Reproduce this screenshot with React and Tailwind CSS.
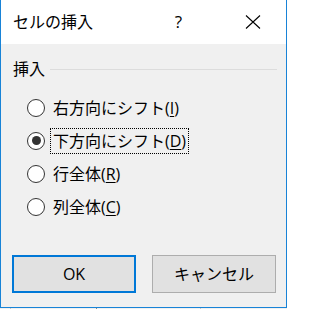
import React, { useState } from "react";

const FONT = { fontFamily: '"Open Sans", "Noto Sans CJK JP", sans-serif' };

const options = [
  { label: "右方向にシフト", key: "I" },
  { label: "下方向にシフト", key: "D" },
  { label: "行全体", key: "R" },
  { label: "列全体", key: "C" },
];

const Radio = ({ checked }) => (
  <span className="w-[18px] h-[18px] rounded-full border border-[#333333] bg-white flex items-center justify-center shrink-0">
    {checked && <span className="w-[9px] h-[9px] rounded-full bg-[#333333]" />}
  </span>
);

export default function App() {
  const [selected, setSelected] = useState(1);

  return (
    <div className="w-[287px] h-[309px] overflow-hidden bg-[#f0f0f0] flex flex-col text-[#000000]" style={FONT}>
      {/* Dialog window */}
      <div className="w-[287px] h-[308px] border-l border-r border-b border-[#1883d7] flex flex-col">
        {/* Title bar */}
        <div className="h-[44px] bg-white flex items-center shrink-0">
          <span className="ml-[12px] text-[16px] leading-[20px]">セルの挿入</span>
          <span className="ml-auto mr-[63px] text-[17px] leading-[20px]">?</span>
          <svg width="16" height="16" viewBox="0 0 16 16" className="mr-[25px]">
            <path d="M1 1.5 L15 14.5 M15 1.5 L1 14.5" stroke="#000" strokeWidth="1.1" fill="none" />
          </svg>
        </div>

        {/* Body */}
        <div className="flex-1 bg-[#f0f0f0] flex flex-col">
          {/* Group header */}
          <div className="mt-[16px] h-[18px] flex items-center">
            <span className="ml-[12px] text-[16px] leading-[18px]">挿入</span>
            <span className="ml-[5px] mr-[9px] flex-1 h-px bg-[#dcdcdc]" />
          </div>

          {/* Radio options */}
          <div className="mt-[13px] flex flex-col">
            {options.map((opt, i) => (
              <label
                key={opt.key}
                className="h-[33px] flex items-center cursor-default"
                onClick={() => setSelected(i)}
              >
                <span className="ml-[26px]">
                  <Radio checked={selected === i} />
                </span>
                <span
                  className={`ml-[5px] h-[26px] px-[2px] flex items-center text-[16px] leading-[20px] border border-dotted ${
                    selected === i ? "border-[#000000]" : "border-transparent"
                  }`}
                >
                  {opt.label}(<u className="underline-offset-[2px]">{opt.key}</u>)
                </span>
              </label>
            ))}
          </div>

          {/* Buttons */}
          <div className="mt-[32px] flex gap-[16px] ml-[11px]">
            <button
              type="button"
              className="w-[124px] h-[38px] border-2 border-[#0078d7] bg-[#e1e1e1] text-[16px] flex items-center justify-center"
            >
              OK
            </button>
            <button
              type="button"
              className="w-[124px] h-[38px] border border-[#adadad] bg-[#e1e1e1] text-[16px] flex items-center justify-center"
            >
              キャンセル
            </button>
          </div>
        </div>
      </div>

      {/* Strip of the window behind */}
      <div className="h-px flex">
        <span className="w-[10px] bg-[#f0f0f0]" />
        <span className="w-px bg-[#c8c8c8]" />
        <span className="w-[85px] bg-[#f0f0f0]" />
        <span className="w-px bg-[#8a8a8a]" />
        <span className="w-[103px] bg-[#f0f0f0]" />
        <span className="w-px bg-[#c8c8c8]" />
        <span className="flex-1 bg-[#f0f0f0]" />
      </div>
    </div>
  );
}
